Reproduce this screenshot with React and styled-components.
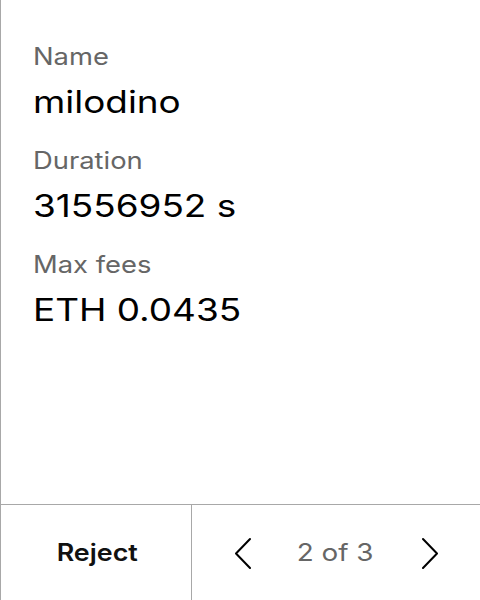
import React from 'react';
import styled, { createGlobalStyle } from 'styled-components';

const GlobalStyle = createGlobalStyle`
  html, body {
    margin: 0;
    padding: 0;
    background: #fff;
  }
  body {
    font-family: Inter, 'Noto Sans', sans-serif;
  }
`;

// the source UI is rendered slightly stretched horizontally
const Stretch = styled.span`
  display: inline-block;
  transform: scaleX(${(p) => p.$x || 1.16});
  transform-origin: ${(p) => p.$origin || 'left'} center;
  white-space: nowrap;
`;

const Panel = styled.div`
  width: 480px;
  height: 600px;
  box-sizing: border-box;
  border-left: 1px solid #a8a8a8;
  display: flex;
  flex-direction: column;
  background: #fff;
`;

const Details = styled.div`
  flex: 1;
  display: flex;
  flex-direction: column;
  gap: 23px;
  padding: 41px 0 0 32px;
`;

const Field = styled.div`
  display: flex;
  flex-direction: column;
`;

const Label = styled.div`
  font-size: 24px;
  line-height: 32px;
  color: #666;
`;

const Value = styled.div`
  margin-top: 9px;
  font-size: 31px;
  line-height: 40px;
  color: #000;
`;

const Footer = styled.div`
  height: 96px;
  border-top: 1px solid #a8a8a8;
  display: grid;
  grid-template-columns: 191px 1fr;
  box-sizing: border-box;
`;

const RejectButton = styled.button`
  all: unset;
  display: flex;
  align-items: center;
  justify-content: center;
  padding-left: 3px;
  border-right: 1px solid #a8a8a8;
  font-family: Inter, sans-serif;
  font-size: 24px;
  font-weight: 600;
  color: #111;
  cursor: pointer;
`;

const Pager = styled.div`
  display: grid;
  grid-template-columns: 16px 171px 16px;
  align-items: center;
  padding-left: 43px;
`;

const PageText = styled.span`
  font-size: 24px;
  color: #666;
  text-align: center;
  padding-right: 3px;
`;

const Chevron = styled.button`
  all: unset;
  display: flex;
  cursor: pointer;
`;

const ChevronIcon = ({ dir }) => (
  <svg width='16' height='32' viewBox='0 0 16 32' fill='none'>
    <polyline
      points={dir === 'left' ? '15,2 1,16.5 15,31' : '1,2 15,16.5 1,31'}
      stroke='#000'
      strokeWidth='2'
      strokeLinecap='round'
      strokeLinejoin='round'
    />
  </svg>
);

const fields = [
  { label: 'Name', value: 'milodino' },
  { label: 'Duration', value: '31556952 s' },
  { label: 'Max fees', value: 'ETH 0.0435' },
];

const App = () => {
  return (
    <>
      <GlobalStyle />
      <Panel>
        <Details>
          {fields.map((f) => (
            <Field key={f.label}>
              <Label>
                <Stretch $x={1.14}>{f.label}</Stretch>
              </Label>
              <Value>
                <Stretch $x={1.19}>{f.value}</Stretch>
              </Value>
            </Field>
          ))}
        </Details>
        <Footer>
          <RejectButton>
            <Stretch $x={1.12} $origin='center'>
              Reject
            </Stretch>
          </RejectButton>
          <Pager>
            <Chevron>
              <ChevronIcon dir='left' />
            </Chevron>
            <PageText>
              <Stretch $x={1.16} $origin='center'>
                2 of 3
              </Stretch>
            </PageText>
            <Chevron>
              <ChevronIcon dir='right' />
            </Chevron>
          </Pager>
        </Footer>
      </Panel>
    </>
  );
};

export default App;
